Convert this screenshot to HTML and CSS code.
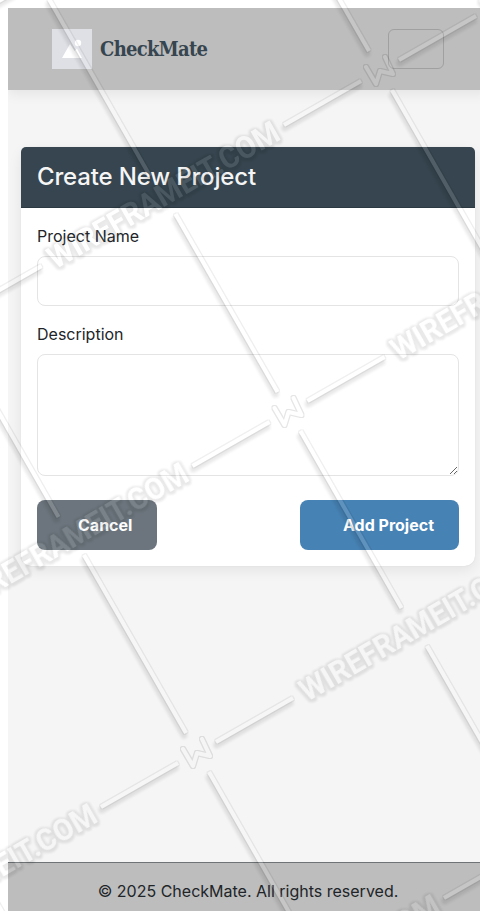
FILE: index.html
```html
<!DOCTYPE html>
<html lang="en">
<head>
<meta charset="utf-8">
<title>CheckMate</title>
<link rel="stylesheet" href="styles.css">
</head>
<body>
<div class="page">
  <nav class="navbar">
    <a class="brand">
      <svg class="logo" width="40" height="40" viewBox="0 0 40 40"><rect width="40" height="40" fill="#dfe0e6"/><path d="M10 29 18 15 22.5 22 25 19.5 30 29Z" fill="#fff"/><circle cx="26" cy="14" r="3.2" fill="#fff"/></svg>
      <span class="brand-name">CheckMate</span>
    </a>
    <button class="toggler" aria-label="Menu"></button>
  </nav>
  <main class="content">
    <section class="card">
      <h1 class="card-header">Create New Project</h1>
      <form class="card-body">
        <label for="name">Project Name</label>
        <input class="field" id="name" type="text">
        <label for="description">Description</label>
        <textarea class="field area" id="description"></textarea>
        <div class="actions">
          <button type="button" class="btn cancel">Cancel</button>
          <button type="button" class="btn add">Add Project</button>
        </div>
      </form>
    </section>
  </main>
  <footer class="footer">© 2025 CheckMate. All rights reserved.</footer>
</div>
<svg class="watermark" width="480" height="911" viewBox="0 0 480 911" aria-hidden="true">
  <defs>
    <filter id="emboss" filterUnits="userSpaceOnUse" x="-20" y="-20" width="520" height="951" color-interpolation-filters="sRGB">
      <feMorphology in="SourceAlpha" operator="dilate" radius="0.8" result="fat"/>
      <feComposite in="fat" in2="SourceAlpha" operator="out" result="ring"/>
      <feComponentTransfer in="ring" result="edge"><feFuncA type="linear" slope="0.06"/></feComponentTransfer>
      <feOffset in="fat" dx="-1" dy="4"/>
      <feGaussianBlur stdDeviation="1.5"/>
      <feComposite in2="SourceAlpha" operator="out"/>
      <feComponentTransfer result="shade"><feFuncA type="linear" slope="0.09"/></feComponentTransfer>
      <feComponentTransfer in="SourceGraphic" result="face"><feFuncA type="linear" slope="0.14"/></feComponentTransfer>
      <feMerge><feMergeNode in="shade"/><feMergeNode in="edge"/><feMergeNode in="face"/></feMerge>
    </filter>
    <filter id="halo" filterUnits="userSpaceOnUse" x="-20" y="-20" width="520" height="951" color-interpolation-filters="sRGB">
      <feMorphology in="SourceAlpha" operator="dilate" radius="2"/>
      <feOffset dx="0" dy="0.5"/>
      <feGaussianBlur stdDeviation="0.8"/>
      <feComposite in2="SourceAlpha" operator="out"/>
      <feComponentTransfer result="shade"><feFuncA type="linear" slope="0.09"/></feComponentTransfer>
      <feComponentTransfer in="SourceGraphic" result="face"><feFuncA type="linear" slope="0.1"/></feComponentTransfer>
      <feMerge><feMergeNode in="shade"/><feMergeNode in="face"/></feMerge>
    </filter>
    <filter id="outline" filterUnits="userSpaceOnUse" x="-20" y="-20" width="520" height="951" color-interpolation-filters="sRGB">
      <feMorphology in="SourceAlpha" operator="dilate" radius="1"/>
      <feGaussianBlur stdDeviation="0.5"/>
      <feComposite in2="SourceAlpha" operator="out"/>
      <feComponentTransfer result="edge"><feFuncA type="linear" slope="0.1"/></feComponentTransfer>
      <feComponentTransfer in="SourceGraphic" result="face"><feFuncA type="linear" slope="0.08"/></feComponentTransfer>
      <feMerge><feMergeNode in="edge"/><feMergeNode in="face"/></feMerge>
    </filter>
    <path id="rule" class="rule" d="M19-11 96-55M-19 10-96 54M-11-20-113-198M12 19 113 196"/>
    <path id="mono" class="mono" d="M-14-4-4 13 0 0 13 3 5-14"/>
    <text id="word" class="word" text-anchor="middle" textLength="262" lengthAdjust="spacingAndGlyphs" transform="translate(-216.5 124) rotate(-30)" y="10.5">WIREFRAMEIT.COM</text>
  </defs>
  <g filter="url(#emboss)">
    <use href="#rule" x="37" y="-20"/>
    <use href="#rule" x="380" y="71"/>
    <use href="#rule" x="-54.5" y="321"/>
    <use href="#rule" x="288.5" y="412"/>
    <use href="#rule" x="631.5" y="503"/>
    <use href="#rule" x="197" y="753"/>
    <use href="#rule" x="540" y="844"/>
    <use href="#rule" x="106" y="1094"/>
  </g>
  <g filter="url(#halo)">
    <use href="#word" x="380" y="71"/>
    <use href="#word" x="723" y="162"/>
    <use href="#word" x="814" y="-179"/>
    <use href="#word" x="288.5" y="412"/>
    <use href="#word" x="631.5" y="503"/>
    <use href="#word" x="197" y="753"/>
    <use href="#word" x="540" y="844"/>
  </g>
  <g filter="url(#outline)">
    <use href="#mono" x="380" y="71"/>
    <use href="#mono" x="288.5" y="412"/>
    <use href="#mono" x="197" y="753"/>
  </g>
</svg>
</body>
</html>
```
FILE: styles.css
```css
* { box-sizing: border-box; }
html { background: #fff; overflow: hidden; }
body {
  margin: 8px 0 0 8px;
  width: 480px;
  font: 16px/24px Inter, "Liberation Sans", sans-serif;
  color: #212529;
}
.page {
  display: flex;
  flex-direction: column;
  height: 903px;
  background: #f5f5f5;
}
.navbar {
  display: flex;
  align-items: center;
  justify-content: space-between;
  height: 82px;
  padding: 0 44px;
  background: #bdbdbd;
  box-shadow: 0 4px 12px rgba(0, 0, 0, .07);
}
.brand { display: flex; align-items: center; gap: 8px; }
.logo { display: block; }
.brand-name {
  font: bold 20px/30px "Roboto Slab", "DejaVu Serif", serif;
  font-stretch: condensed;
  letter-spacing: -.7px;
  color: #36454f;
}
.toggler {
  width: 56px;
  height: 40px;
  border: 1px solid #a0a0a0;
  border-radius: 6px;
  background: none;
}
.content { flex: 1; padding: 57px 13px 0; }
.card {
  border-radius: 10px;
  background: #fff;
  box-shadow: 0 4px 14px rgba(0, 0, 0, .08), 0 0 1px rgba(0, 0, 0, .15);
}
.card-header {
  height: 61px;
  margin: 0;
  padding: 15px 16px;
  border-bottom: 1px solid #2b3942;
  border-radius: 5px 5px 0 0;
  background: #36454f;
  color: #f5f5f5;
  font-size: 24px;
  font-weight: 500;
  line-height: 29px;
  letter-spacing: -.16px;
}
.card-body { padding: 16px; }
label { display: block; margin-bottom: 8px; }
.field {
  display: block;
  width: 100%;
  height: 50px;
  margin: 0 0 16px;
  border: 1px solid #e4e4e4;
  border-radius: 8px;
  background: #fff;
}
.area { height: 122px; margin-bottom: 24px; resize: vertical; }
.actions { display: flex; justify-content: space-between; }
.btn {
  height: 50px;
  padding: 0 25px 0 41px;
  border: 0;
  border-radius: 8px;
  color: #fff;
  font: bold 16px/24px Inter, sans-serif;
  white-space: nowrap;
}
.cancel { width: 120px; background: #6c757d; }
.add { width: 159px; padding-left: 43px; background: #4682b4; }
.footer {
  height: 49px;
  padding-top: 16px;
  border-top: 1px solid #6f7376;
  background: #bdbdbd;
  text-align: center;
}
.watermark {
  position: absolute;
  top: 0;
  left: 0;
  pointer-events: none;
}
.rule { fill: none; stroke: #fff; stroke-width: 4; }
.mono { fill: none; stroke: #fff; stroke-width: 4; stroke-linecap: round; stroke-linejoin: round; }
.word { fill: #fff; font: bold 31px Roboto, sans-serif; }
```
